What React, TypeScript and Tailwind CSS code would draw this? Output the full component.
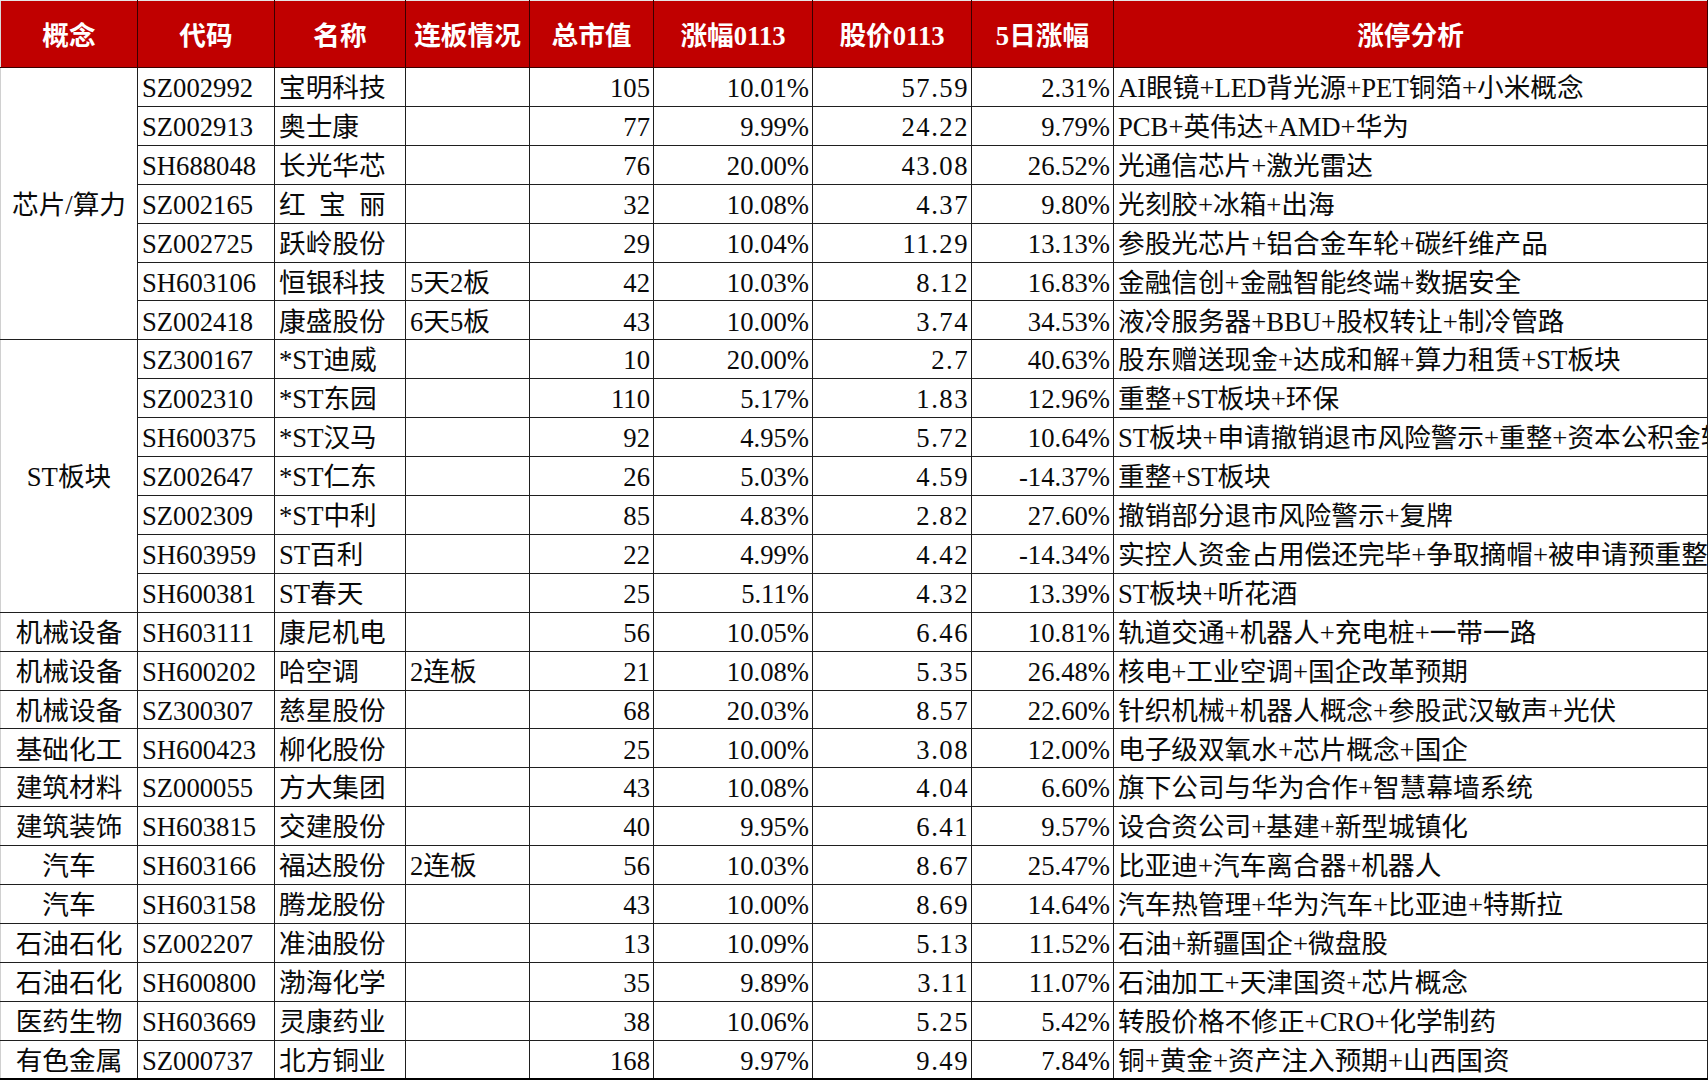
import React from "react";

type Row = {
  concept?: string;
  span?: number;
  code: string;
  name: string;
  lb: string;
  cap: string;
  chg: string;
  price: string;
  d5: string;
  note: string;
};

const rows: Row[] = [
  { concept: "芯片/算力", span: 7, code: "SZ002992", name: "宝明科技", lb: "", cap: "105", chg: "10.01%", price: "57.59", d5: "2.31%", note: "AI眼镜+LED背光源+PET铜箔+小米概念" },
  { code: "SZ002913", name: "奥士康", lb: "", cap: "77", chg: "9.99%", price: "24.22", d5: "9.79%", note: "PCB+英伟达+AMD+华为" },
  { code: "SH688048", name: "长光华芯", lb: "", cap: "76", chg: "20.00%", price: "43.08", d5: "26.52%", note: "光通信芯片+激光雷达" },
  { code: "SZ002165", name: "红\u2002宝\u2002丽", lb: "", cap: "32", chg: "10.08%", price: "4.37", d5: "9.80%", note: "光刻胶+冰箱+出海" },
  { code: "SZ002725", name: "跃岭股份", lb: "", cap: "29", chg: "10.04%", price: "11.29", d5: "13.13%", note: "参股光芯片+铝合金车轮+碳纤维产品" },
  { code: "SH603106", name: "恒银科技", lb: "5天2板", cap: "42", chg: "10.03%", price: "8.12", d5: "16.83%", note: "金融信创+金融智能终端+数据安全" },
  { code: "SZ002418", name: "康盛股份", lb: "6天5板", cap: "43", chg: "10.00%", price: "3.74", d5: "34.53%", note: "液冷服务器+BBU+股权转让+制冷管路" },
  { concept: "ST板块", span: 7, code: "SZ300167", name: "*ST迪威", lb: "", cap: "10", chg: "20.00%", price: "2.7", d5: "40.63%", note: "股东赠送现金+达成和解+算力租赁+ST板块" },
  { code: "SZ002310", name: "*ST东园", lb: "", cap: "110", chg: "5.17%", price: "1.83", d5: "12.96%", note: "重整+ST板块+环保" },
  { code: "SH600375", name: "*ST汉马", lb: "", cap: "92", chg: "4.95%", price: "5.72", d5: "10.64%", note: "ST板块+申请撤销退市风险警示+重整+资本公积金转增股本" },
  { code: "SZ002647", name: "*ST仁东", lb: "", cap: "26", chg: "5.03%", price: "4.59", d5: "-14.37%", note: "重整+ST板块" },
  { code: "SZ002309", name: "*ST中利", lb: "", cap: "85", chg: "4.83%", price: "2.82", d5: "27.60%", note: "撤销部分退市风险警示+复牌" },
  { code: "SH603959", name: "ST百利", lb: "", cap: "22", chg: "4.99%", price: "4.42", d5: "-14.34%", note: "实控人资金占用偿还完毕+争取摘帽+被申请预重整" },
  { code: "SH600381", name: "ST春天", lb: "", cap: "25", chg: "5.11%", price: "4.32", d5: "13.39%", note: "ST板块+听花酒" },
  { concept: "机械设备", span: 1, code: "SH603111", name: "康尼机电", lb: "", cap: "56", chg: "10.05%", price: "6.46", d5: "10.81%", note: "轨道交通+机器人+充电桩+一带一路" },
  { concept: "机械设备", span: 1, code: "SH600202", name: "哈空调", lb: "2连板", cap: "21", chg: "10.08%", price: "5.35", d5: "26.48%", note: "核电+工业空调+国企改革预期" },
  { concept: "机械设备", span: 1, code: "SZ300307", name: "慈星股份", lb: "", cap: "68", chg: "20.03%", price: "8.57", d5: "22.60%", note: "针织机械+机器人概念+参股武汉敏声+光伏" },
  { concept: "基础化工", span: 1, code: "SH600423", name: "柳化股份", lb: "", cap: "25", chg: "10.00%", price: "3.08", d5: "12.00%", note: "电子级双氧水+芯片概念+国企" },
  { concept: "建筑材料", span: 1, code: "SZ000055", name: "方大集团", lb: "", cap: "43", chg: "10.08%", price: "4.04", d5: "6.60%", note: "旗下公司与华为合作+智慧幕墙系统" },
  { concept: "建筑装饰", span: 1, code: "SH603815", name: "交建股份", lb: "", cap: "40", chg: "9.95%", price: "6.41", d5: "9.57%", note: "设合资公司+基建+新型城镇化" },
  { concept: "汽车", span: 1, code: "SH603166", name: "福达股份", lb: "2连板", cap: "56", chg: "10.03%", price: "8.67", d5: "25.47%", note: "比亚迪+汽车离合器+机器人" },
  { concept: "汽车", span: 1, code: "SH603158", name: "腾龙股份", lb: "", cap: "43", chg: "10.00%", price: "8.69", d5: "14.64%", note: "汽车热管理+华为汽车+比亚迪+特斯拉" },
  { concept: "石油石化", span: 1, code: "SZ002207", name: "准油股份", lb: "", cap: "13", chg: "10.09%", price: "5.13", d5: "11.52%", note: "石油+新疆国企+微盘股" },
  { concept: "石油石化", span: 1, code: "SH600800", name: "渤海化学", lb: "", cap: "35", chg: "9.89%", price: "3.11", d5: "11.07%", note: "石油加工+天津国资+芯片概念" },
  { concept: "医药生物", span: 1, code: "SH603669", name: "灵康药业", lb: "", cap: "38", chg: "10.06%", price: "5.25", d5: "5.42%", note: "转股价格不修正+CRO+化学制药" },
  { concept: "有色金属", span: 1, code: "SZ000737", name: "北方铜业", lb: "", cap: "168", chg: "9.97%", price: "9.49", d5: "7.84%", note: "铜+黄金+资产注入预期+山西国资" },
];

const headers = ["概念", "代码", "名称", "连板情况", "总市值", "涨幅0113", "股价0113", "5日涨幅", "涨停分析"];

export default function App() {
  const td = "border border-[#1f1f1f] p-0 pt-[3px] align-middle whitespace-nowrap overflow-hidden";
  return (
    <div className="w-[1708px] h-[1080px] overflow-hidden bg-white font-['Liberation_Serif','Noto_Sans_CJK_SC',serif] text-[26.67px] leading-none text-[#0a0a0a]">
      <table className="table-fixed border-collapse w-[1707px]">
        <colgroup>
          <col className="w-[137px]" />
          <col className="w-[137px]" />
          <col className="w-[131px]" />
          <col className="w-[124px]" />
          <col className="w-[124px]" />
          <col className="w-[159px]" />
          <col className="w-[159px]" />
          <col className="w-[142px]" />
          <col className="w-[594px]" />
        </colgroup>
        <thead>
          <tr className="h-[67px]">
            {headers.map((h, i) => (
              <th
                key={h}
                className={`bg-[#c00000] text-white font-bold text-center align-middle p-0 pt-[4px] border border-[#3a0000] border-t-[#e6e6e6] ${i === 0 ? "border-l-[#d9d9d9]" : ""}`}
              >
                {h}
              </th>
            ))}
          </tr>
        </thead>
        <tbody>
          {rows.map((r, i) => {
            const last = i === rows.length - 1;
            const b = last ? "border-b-2 border-b-black" : "";
            return (
              <tr key={r.code} className="h-[38.92px]">
                {r.concept !== undefined && (
                  <td
                    rowSpan={r.span}
                    className={`${td} text-center border-l-[#d0d0d0] ${r.span === 1 && last ? "border-b-2 border-b-black" : ""}`}
                  >
                    {r.concept}
                  </td>
                )}
                <td className={`${td} ${b} pl-[4px]`}>{r.code}</td>
                <td className={`${td} ${b} pl-[4px]`}>{r.name}</td>
                <td className={`${td} ${b} pl-[4px]`}>{r.lb}</td>
                <td className={`${td} ${b} text-right pr-[3px]`}>{r.cap}</td>
                <td className={`${td} ${b} text-right pr-[3px]`}>{r.chg}</td>
                <td className={`${td} ${b} text-right pr-[2px] tracking-[1.5px]`}>{r.price}</td>
                <td className={`${td} ${b} text-right pr-[3px]`}>{r.d5}</td>
                <td className={`${td} ${b} pl-[4px]`}>{r.note}</td>
              </tr>
            );
          })}
        </tbody>
      </table>
    </div>
  );
}
